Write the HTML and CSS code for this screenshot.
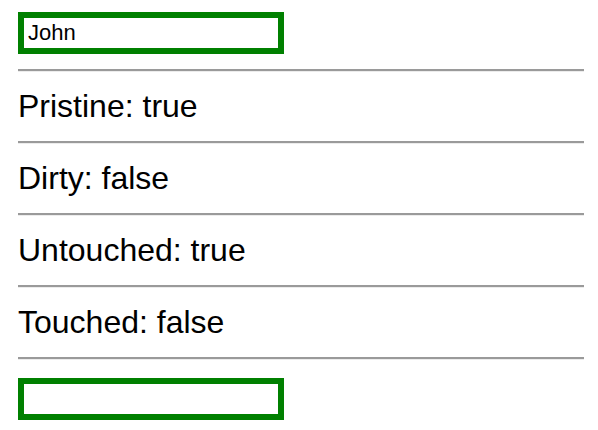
FILE: index.html
```html
<!DOCTYPE html>
<html>
<head>
<meta charset="utf-8">
<link rel="stylesheet" href="styles.css">
</head>
<body>
  <form class="form">
    <input class="field field-top" type="text" value="John">
    <hr class="rule rule-first">
    <p class="status">Pristine: true</p>
    <hr class="rule">
    <p class="status">Dirty: false</p>
    <hr class="rule">
    <p class="status">Untouched: true</p>
    <hr class="rule">
    <p class="status">Touched: false</p>
    <hr class="rule">
    <input class="field field-bottom" type="text" value="">
  </form>
</body>
</html>
```

FILE: styles.css
```css
html, body {
  margin: 0;
  padding: 0;
  background: #fff;
}

body {
  padding: 12px 14px 0 18px;
  font-family: "Liberation Sans", Arial, sans-serif;
  color: #000;
}

.form {
  display: block;
  margin: 0;
}

.field {
  display: block;
  box-sizing: border-box;
  width: 266px;
  height: 42px;
  margin: 0;
  padding: 0 4px;
  border: 6px solid #008000;
  background: #fff;
  font-family: "Liberation Sans", Arial, sans-serif;
  font-size: 22px;
  color: #000;
  outline: none;
}

.rule {
  display: block;
  height: 0;
  margin: 0;
  border: 0;
  border-top: 2px solid #9a9a9a;
  border-bottom: 1px solid #ececec;
}

.rule-first {
  margin-top: 15px;
}

.status {
  margin: 16px 0 17px;
  font-size: 32px;
  line-height: 36px;
}

.field-bottom {
  margin-top: 18px;
}
```
